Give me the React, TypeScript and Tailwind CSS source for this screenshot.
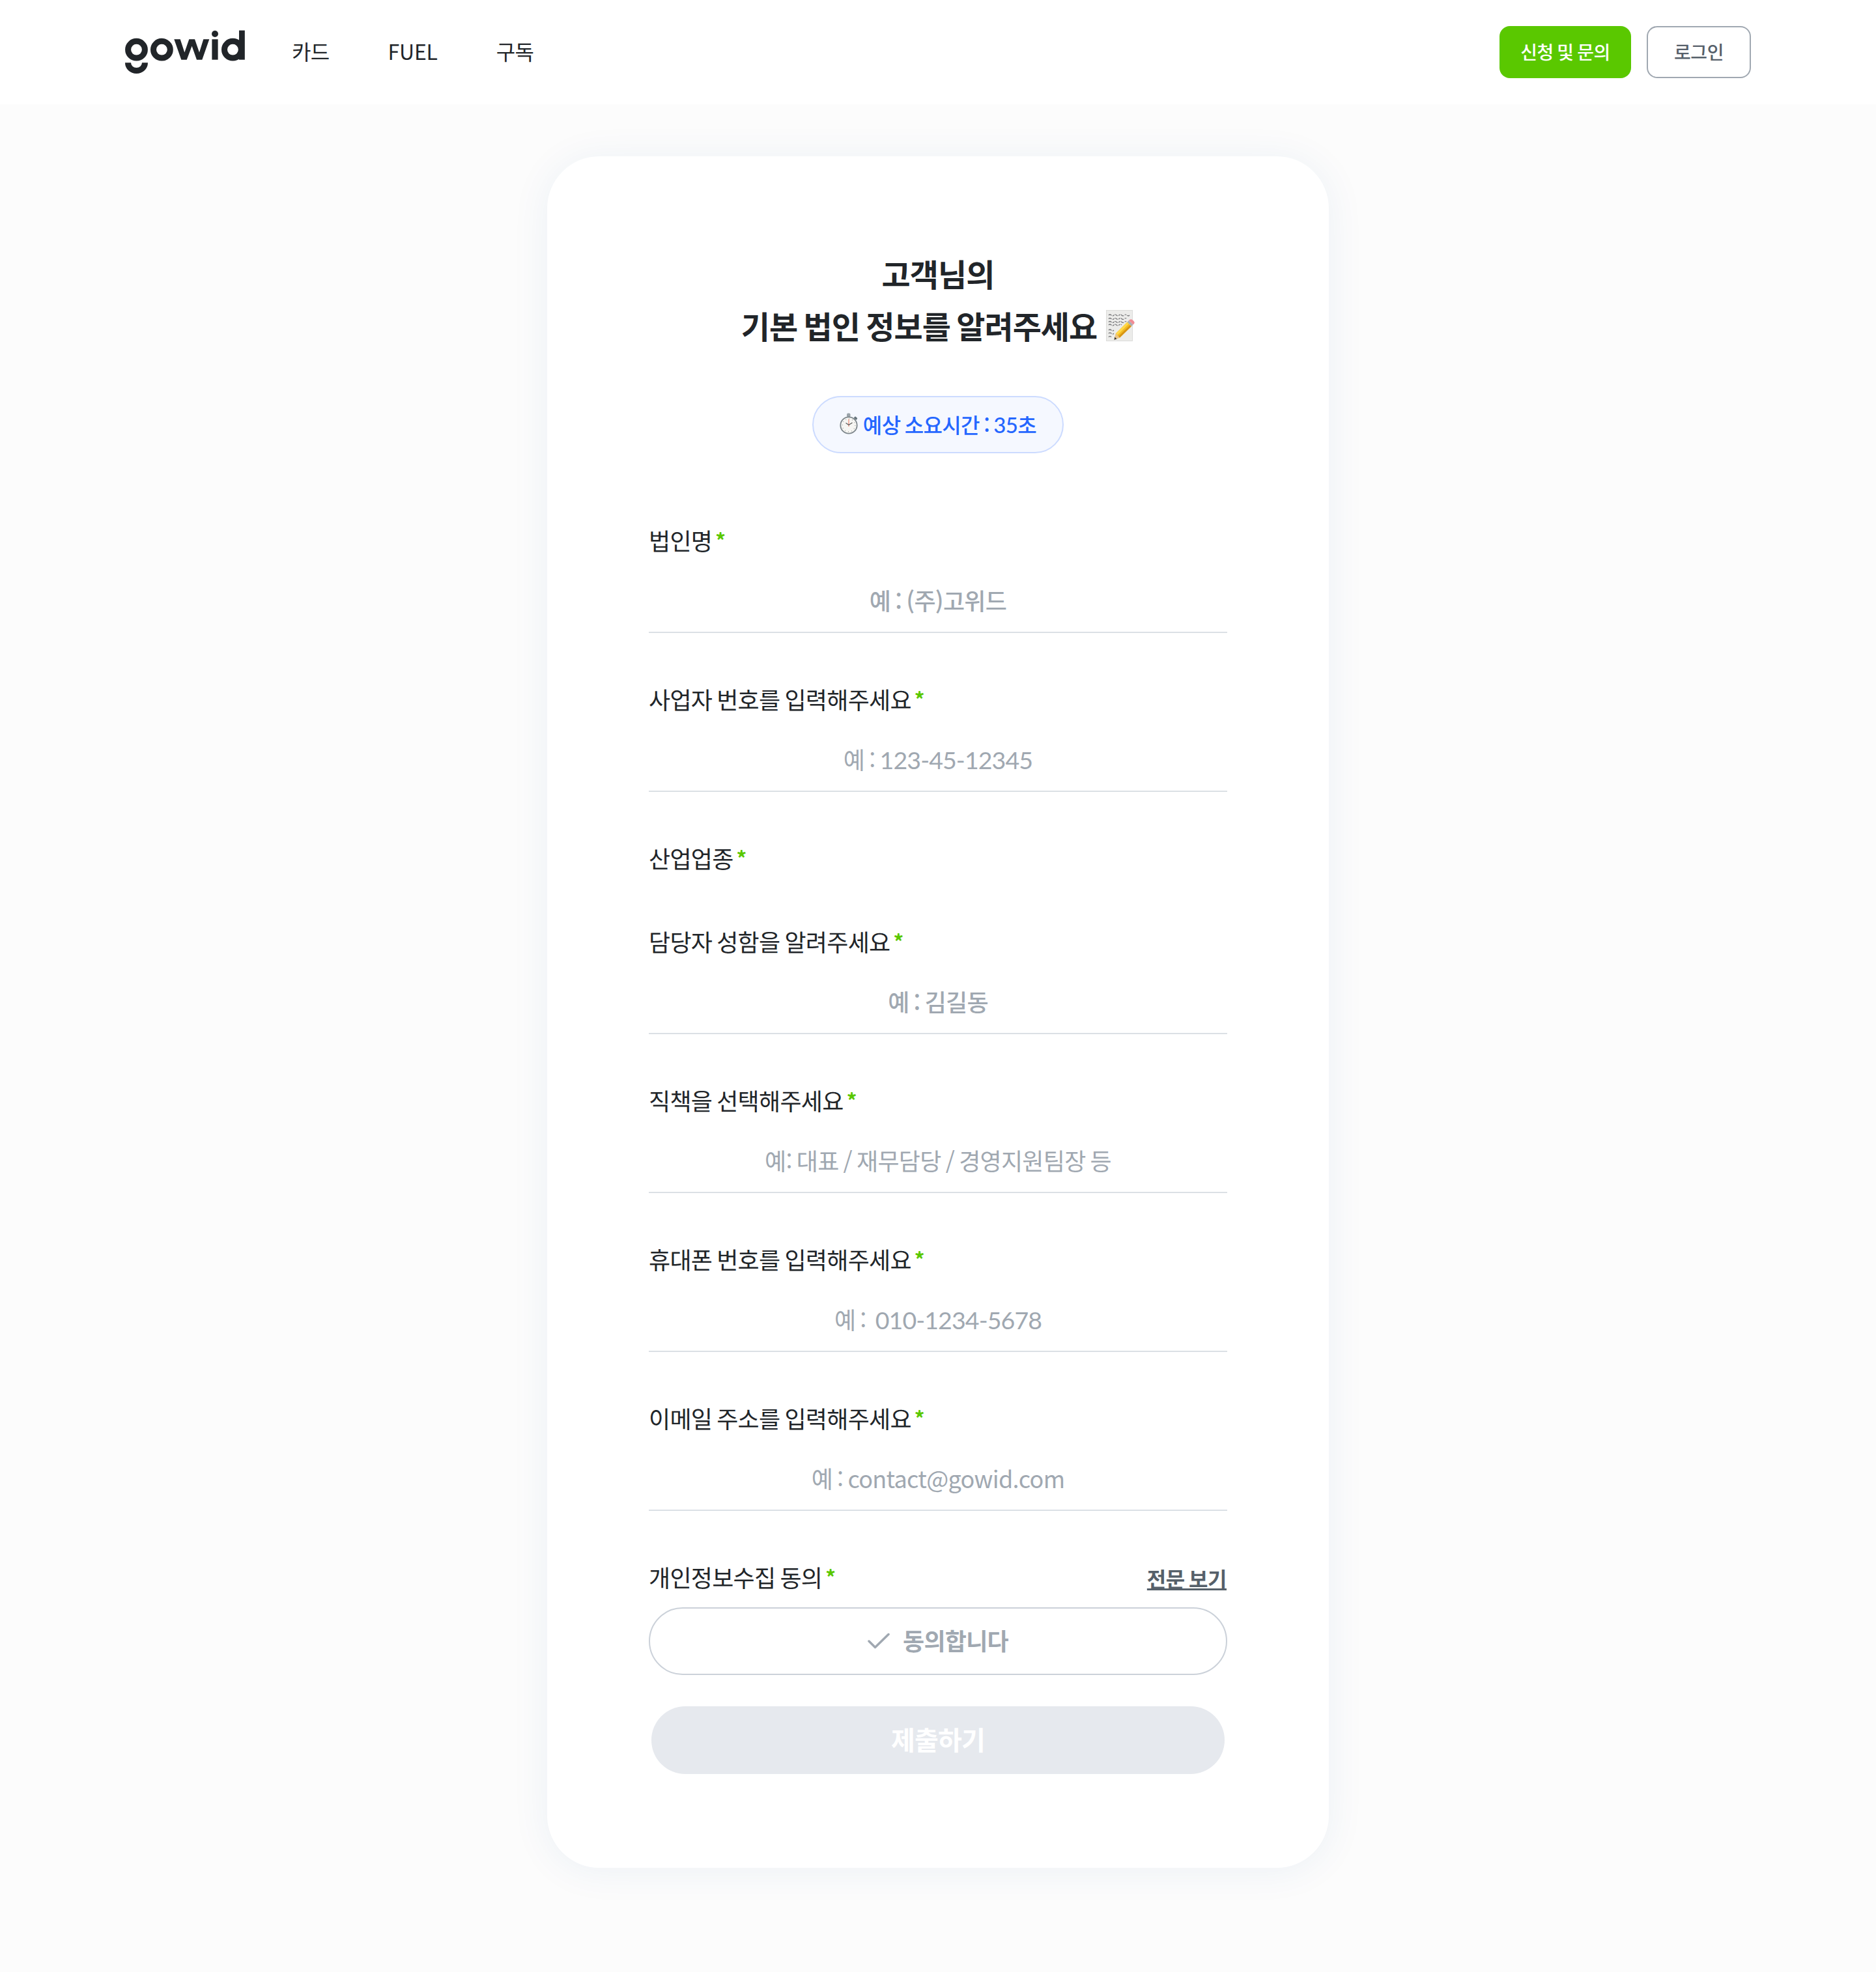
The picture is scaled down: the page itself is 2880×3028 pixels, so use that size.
import React from "react";

const korean = "font-['Noto_Sans_CJK_KR','Noto_Sans',sans-serif]";

function Logo() {
  return (
    <svg width="186" height="68" viewBox="0 0 186 68" fill="#212529" className="shrink-0">
      <g fill="none" stroke="#212529" strokeWidth="9">
        <circle cx="17.5" cy="30.2" r="12.9" />
        <circle cx="56.4" cy="30.2" r="12.9" />
        <circle cx="165.4" cy="30.2" r="12.9" />
        <path d="M4.500 50.300a13 12.300 0 0 0 26 0" />
      </g>
      <path d="M75.300 14.300H84.700L91.300 34.500L98.300 14.300H107L114 34.500L120.300 14.300H129.300L118.300 45.700H110L102.600 24.700L94.700 45.700H86.300Z" />
      <rect x="133.400" y="14.300" width="9.200" height="31.400" />
      <circle cx="138" cy="6" r="5" />
      <rect x="175" y="0.700" width="8.800" height="45" />
    </svg>
  );
}

function MemoIcon() {
  return (
    <svg width="44" height="50" viewBox="0 0 44 50" className="ml-3.5 mt-[3px]">
      <rect x="0.500" y="0.500" width="40" height="47" fill="#ececea" stroke="#dcdcda" />
      <g stroke="#77777a" strokeWidth="1.200" fill="none" strokeDasharray="5 1.500 3 1">
        <path d="M4 8q2-2 4 0t4 0 4 0 4 0 4 0 4 0 4 0 4 0" />
        <path d="M4 13.500q2-2 4 0t4 0 4 0 4 0 4 0 4 0 4 0" />
        <path d="M4 18.500q2-2 4 0t4 0 4 0 4 0 4 0 4 0 4 0" />
        <path d="M4 23q2-2 4 0t4 0 4 0 4 0 4 0" />
        <path d="M4 31q2-2 4 0t4 0" />
        <path d="M4 36q2-2 4 0t4 0" />
        <path d="M4 41.500q2-2 4 0" />
      </g>
      <path d="M32.500 18.500L39 25L21 42.500L12.500 45.500L15 36Z" fill="#f3bb22" />
      <path d="M32.500 18.500L35 21L17.500 38.500L15 36Z" fill="#ffd84a" />
      <path d="M37 23L39 25L21 42.500L19 40.500Z" fill="#d79414" />
      <path d="M15 36L21 42.500L12.500 45.500Z" fill="#e9c48a" />
      <path d="M13.300 41.500L16.500 44.500L12.500 45.800Z" fill="#333" />
      <path d="M32.500 18.500L35 16L41.500 22.500L39 25Z" fill="#a9adb3" />
      <path d="M35 16Q38 12.500 42 16.500Q45.500 20 41.500 22.500Z" fill="#f08c94" />
    </svg>
  );
}

function StopwatchIcon() {
  return (
    <svg width="28" height="34" viewBox="0 0 28 34" className="mr-2">
      <rect x="11" y="0.500" width="5.500" height="6" rx="2" fill="#9aa3a9" />
      <rect x="22" y="6" width="5" height="3.500" rx="1" transform="rotate(42 24 8)" fill="#66747c" />
      <circle cx="14" cy="19" r="12.700" fill="#f6f6f3" stroke="#7d868b" strokeWidth="1.800" />
      <circle cx="14" cy="19" r="9.800" fill="none" stroke="#999" strokeWidth="1.400" strokeDasharray="0.800 4.330" />
      <path d="M14 21V9.500" stroke="#ee8a76" strokeWidth="1.200" />
      <path d="M9.500 15.500L14 18.500L19.500 15" stroke="#555" strokeWidth="1.200" fill="none" />
    </svg>
  );
}

interface FieldProps {
  label: string;
  prefix?: string;
  placeholder?: string;
  medium?: boolean;
  numeric?: boolean;
}

function Label({ text }: { text: string }) {
  return (
    <div className="flex h-[54px] items-center text-[36px] leading-[54px] tracking-[-0.72px] text-[#212529]">
      <span>{text}</span>
      <span className="ml-[5px] text-[31px] font-bold text-[#5ac800]">*</span>
    </div>
  );
}

function Field({ label, prefix, placeholder, medium, numeric }: FieldProps) {
  return (
    <div className={placeholder ? "h-[244px]" : "h-[128px]"}>
      <Label text={label} />
      {placeholder && (
        <div
          className={
            "mt-[20px] flex h-[96px] items-center justify-center border-b-2 border-[#dbe0e5] pb-[4px] text-[36px] tracking-[-0.72px] text-[#a0a8b1] " +
            (medium ? "font-medium" : "font-normal")
          }
        >
          <span className="whitespace-pre">
            {prefix}
            <span
              className={
                numeric
                  ? "font-['Lato','Noto_Sans_CJK_KR',sans-serif] text-[37.5px] leading-none tracking-[-0.9px]"
                  : ""
              }
            >
              {placeholder}
            </span>
          </span>
        </div>
      )}
    </div>
  );
}

const fields: FieldProps[] = [
  { label: "법인명", placeholder: "예 : (주)고위드", medium: true },
  { label: "사업자 번호를 입력해주세요", prefix: "예 : ", placeholder: "123-45-12345", numeric: true },
  { label: "산업업종" },
  { label: "담당자 성함을 알려주세요", placeholder: "예 : 김길동", medium: true },
  { label: "직책을 선택해주세요", placeholder: "예: 대표 / 재무담당 / 경영지원팀장 등" },
  { label: "휴대폰 번호를 입력해주세요", prefix: "예 :  ", placeholder: "010-1234-5678", numeric: true },
  { label: "이메일 주소를 입력해주세요", placeholder: "예 : contact@gowid.com" },
];

export default function App() {
  return (
    <div
      lang="ko"
      className={"h-[3028px] w-[2880px] overflow-hidden bg-[#fcfcfc] text-[#212529] [&_*]:[word-spacing:-0.065em] " + korean}
    >
      <header className="flex h-[160px] items-center bg-white px-[192px]">
        <Logo />
        <nav className="ml-[70px] flex items-center pb-[4px] text-[32px] tracking-[-0.64px]">
          <a>카드</a>
          <a className="ml-[90px] tracking-[-0.2px]">FUEL</a>
          <a className="ml-[90px]">구독</a>
        </nav>
        <div className="ml-auto flex gap-[24px] text-[28px] font-medium tracking-[-0.45px]">
          <button className="h-[80px] w-[202px] rounded-[16px] bg-[#5ac800] pb-[3px] text-white">신청 및 문의</button>
          <button className="h-[80px] w-[160px] rounded-[16px] border-2 border-[#a0a8b1] pb-[3px] text-[#56606a]">로그인</button>
        </div>
      </header>

      <main className="mx-auto mt-[80px] h-[2628px] w-[1200px] rounded-[80px] bg-white px-[156px] pt-[139px] shadow-[0_4px_60px_rgba(33,90,160,0.07)]">
        <h1 className="text-center text-[48px] font-bold leading-[80px] tracking-[-0.96px]">
          <div>고객님의</div>
          <div className="flex items-center justify-center">
            기본 법인 정보를 알려주세요
            <MemoIcon />
          </div>
        </h1>

        <div className="mx-auto mt-[69px] flex h-[88px] w-[386px] items-center justify-center rounded-full border-2 border-[#ccdbff] bg-[#f5f8ff] pb-[2px] text-[32px] font-medium tracking-[-0.64px] text-[#2466ff]">
          <StopwatchIcon />
          <span>
            예상 소요시간 : <span className="font-['Lato','Noto_Sans_CJK_KR',sans-serif] text-[33px] leading-none">35</span>초
          </span>
        </div>

        <form className="mt-[106px]">
          {fields.map((f) => (
            <Field key={f.label} {...f} />
          ))}
          <div className="flex items-center justify-between">
            <Label text="개인정보수집 동의" />
            <a className="mr-px pt-[3px] text-[32px] font-bold tracking-[-0.5px] text-[#56606a] underline">전문 보기</a>
          </div>
          <div className="mt-[20px] flex h-[104px] items-center justify-center rounded-full border-2 border-[#cbd1d9] text-[36px] font-bold tracking-[-0.72px] text-[#a0a8b1]">
            <svg width="34" height="26" viewBox="0 0 34 26" fill="none" stroke="#a0a8b1" strokeWidth="3.500" strokeLinecap="round" strokeLinejoin="round" className="mr-5">
              <path d="M2 13L11.500 22.500L32 2.500" />
            </svg>
            <span className="pb-[4px]">동의합니다</span>
          </div>
          <button type="button" className="mx-[4px] mt-[48px] h-[104px] w-[880px] rounded-full bg-[#e6e9ee] pb-[4px] text-[40px] font-bold tracking-[-0.8px] text-white">
            제출하기
          </button>
        </form>
      </main>
    </div>
  );
}
